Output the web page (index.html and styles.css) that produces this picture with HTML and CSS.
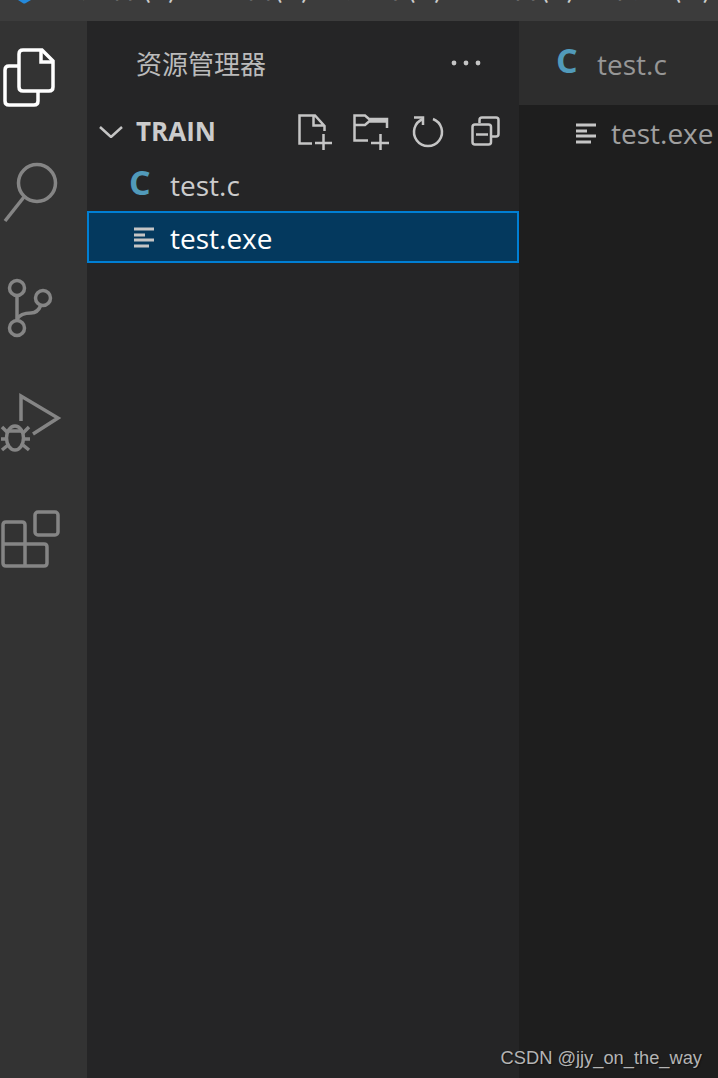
FILE: index.html
```html
<!DOCTYPE html>
<html lang="zh-CN">

<head>
    <meta charset="UTF-8">
    <meta name="viewport" content="width=device-width, initial-scale=1.0">
    <title>Visual Studio Code</title>
    <link rel="stylesheet" href="styles.css">
</head>

<body>
    <div class="window">

        <!-- title bar, cropped at the top of the shot -->
        <div class="titleBar">
            <svg class="logo" width="13" height="4" viewBox="0 0 13 4">
                <path d="M0 0H13L7 3.6H5.5Z" fill="#2489db" />
            </svg>
            <div class="menu">
                <span>文件(F)</span>
                <span>编辑(E)</span>
                <span>选择(S)</span>
                <span>查看(V)</span>
                <span>转到(G)</span>
            </div>
        </div>

        <div class="workbench">
            <div class="activityBar">
                <svg class="activityIcon active" viewBox="0 21 87 116">
                    <path d="M18 66H9Q5 66 5 70V101Q5 105 9 105H34Q38 105 38 101V91" />
                    <path d="M23 50H42L53 61V87Q53 91 49 91H23Q19 91 19 87V54Q19 50 23 50Z" />
                    <path d="M41 50V62H53" />
                </svg>
                <svg class="activityIcon" viewBox="0 137 87 116">
                    <circle cx="37" cy="183" r="18.5" />
                    <path d="M24 197L5 221" />
                </svg>
                <svg class="activityIcon" viewBox="0 253 87 116">
                    <circle cx="17" cy="288" r="7.5" />
                    <circle cx="43" cy="298" r="7.5" />
                    <circle cx="17" cy="328" r="7.5" />
                    <path d="M17 295V320" />
                    <path d="M17 319C20 314 25 313 31 313C36 313 39 310 41 305" />
                </svg>
                <svg class="activityIcon" viewBox="0 369 87 116">
                    <path d="M21 421V396L58 418L33 434" />
                    <ellipse cx="15" cy="438" rx="8.500" ry="12" />
                    <path d="M7 431H23M2 427L8 433M29 427L23 433M1 439H7M24 439H30M2 450L8 445M29 450L23 445" />
                </svg>
                <svg class="activityIcon" viewBox="0 485 87 116">
                    <rect x="35" y="512" width="23" height="23" rx="3" />
                    <path d="M25 544V525Q25 522 22 522H6Q3 522 3 525V563Q3 566 6 566H44Q47 566 47 563V547Q47 544 44 544H3M25 544V566" />
                </svg>
            </div>

            <div class="sideBar">
                <div class="sideHeader">
                    <span class="sideTitle">资源管理器</span>
                    <svg class="moreIcon" width="30" height="6" viewBox="0 0 30 6">
                        <circle cx="3" cy="3" r="2.4" />
                        <circle cx="15" cy="3" r="2.4" />
                        <circle cx="27" cy="3" r="2.4" />
                    </svg>
                </div>

                <div class="sectionHeader">
                    <svg class="chevron" width="24" height="12" viewBox="0 0 24 12">
                        <path d="M1 1L12 11L23 1" />
                    </svg>
                    <span class="sectionTitle">TRAIN</span>
                    <div class="toolbar">
                        <svg class="toolIcon" viewBox="296 112 36 40">
                            <path d="M312 143.500H299.500V115.500H315L324.500 126V131M313.500 115.500V125.500H324.500" />
                            <path d="M315 143H332M323.500 134V150" />
                        </svg>
                        <svg class="toolIcon" viewBox="353 112 36 40">
                            <path d="M368 140.500H354.500V115.500H365L369 119H387V128M354.500 125H365L369 121.500H387" />
                            <path d="M371 143H389M380.500 134V150" />
                        </svg>
                        <svg class="toolIcon" viewBox="410 112 36 40">
                            <path d="M433 119A14 14 0 1 1 423 119" />
                            <path d="M414 117.500H423V125" />
                        </svg>
                        <svg class="toolIcon" viewBox="467 112 36 40">
                            <path d="M479.500 123V120Q479.500 117.500 482 117.500H496Q498.500 117.500 498.500 120V134Q498.500 136.500 496 136.500H491" />
                            <rect x="472.500" y="124.500" width="18.500" height="20" rx="2.500" />
                            <path d="M476 134.500H488" />
                        </svg>
                    </div>
                </div>

                <div class="fileRow">
                    <span class="cIcon">C</span>
                    <span>test.c</span>
                </div>
                <div class="fileRow selected">
                    <svg class="linesIcon" width="21" height="21" viewBox="0 0 21 21">
                        <path d="M0 2H20M0 8H11M0 13H20M0 19H15" />
                    </svg>
                    <span class="fileName">test.exe</span>
                </div>
            </div>

            <div class="editor">
                <div class="tabBar">
                    <div class="tab">
                        <span class="cIcon">C</span>
                        <span class="fileName">test.c</span>
                    </div>
                </div>
                <div class="breadcrumb">
                    <svg class="linesIcon" width="21" height="21" viewBox="0 0 21 21">
                        <path d="M0 2H20M0 8H11M0 13H20M0 19H15" />
                    </svg>
                    <span>test.exe</span>
                </div>
            </div>
        </div>

        <div class="watermark">CSDN @jjy_on_the_way</div>
    </div>
</body>

</html>
```

FILE: styles.css
```css
body {
    margin: 0;
    background-color: #1e1e1e;
    font-family: "Open Sans", "Noto Sans CJK SC", sans-serif;
}

.window {
    position: relative;
    width: 718px;
    height: 1078px;
    overflow: hidden;
    display: flex;
    flex-direction: column;
}

.titleBar {
    flex: 0 0 21px;
    display: flex;
    background-color: #3c3c3c;
    overflow: hidden;
}

.logo {
    flex: none;
    margin-left: 18px;
}

.menu {
    display: flex;
    gap: 35px;
    margin-left: 50px;
    margin-top: -35px;
    font-family: "Noto Sans CJK SC", sans-serif;
    font-size: 30px;
    line-height: 38px;
    color: #cccccc;
    white-space: nowrap;
}

.workbench {
    flex: 1;
    display: flex;
    min-height: 0;
}

.activityBar {
    flex: 0 0 87px;
    background-color: #333333;
    display: flex;
    flex-direction: column;
}

.activityIcon {
    display: block;
    width: 87px;
    height: 116px;
    fill: none;
    stroke: #858585;
    stroke-width: 3.5;
}

.activityIcon.active {
    stroke: #ffffff;
}

.sideBar {
    flex: 0 0 432px;
    background-color: #252526;
    color: #cccccc;
}

.sideHeader {
    height: 84px;
    display: flex;
    align-items: center;
    padding-left: 49px;
    padding-right: 38px;
}

.sideTitle {
    flex: 1;
    font-family: "Noto Sans CJK SC", sans-serif;
    font-size: 26px;
    color: #bbbbbb;
    margin-bottom: 2px;
}

.moreIcon {
    fill: #c5c5c5;
}

.sectionHeader {
    height: 54px;
    display: flex;
    align-items: center;
    padding-left: 12px;
    padding-right: 16px;
}

.chevron {
    fill: none;
    stroke: #c5c5c5;
    stroke-width: 2.5;
    margin-right: 13px;
}

.sectionTitle {
    font-size: 26px;
    font-weight: 700;
    color: #cccccc;
    margin-bottom: 2px;
}

.toolbar {
    display: flex;
    margin-left: auto;
    gap: 21px;
}

.toolIcon {
    display: block;
    width: 36px;
    height: 40px;
    fill: none;
    stroke: #c5c5c5;
    stroke-width: 2.5;
}

.fileRow {
    height: 52px;
    box-sizing: border-box;
    display: flex;
    align-items: center;
    padding-left: 42px;
    font-size: 28px;
}

.fileRow .cIcon {
    margin-right: 20px;
}

.fileRow.selected {
    background-color: #04395e;
    border: 2px solid #007fd4;
    padding-left: 45px;
    color: #ffffff;
}

.fileRow.selected .linesIcon {
    margin-right: 15px;
}

.fileName {
    margin-top: 2px;
}

.cIcon {
    width: 21px;
    font-size: 34px;
    font-weight: 700;
    color: #519aba;
    line-height: 1;
    margin-top: -6px;
}

.linesIcon {
    flex: none;
    fill: none;
    stroke: #c5c5c5;
    stroke-width: 3;
}

.editor {
    flex: 1;
    background-color: #1e1e1e;
}

.tabBar {
    height: 84px;
    background-color: #2d2d2d;
}

.tab {
    height: 84px;
    display: flex;
    align-items: center;
    padding-left: 37px;
    font-size: 28px;
    color: #969696;
}

.tab .cIcon {
    margin-right: 20px;
}

.breadcrumb {
    height: 56px;
    display: flex;
    align-items: center;
    padding-left: 57px;
    font-size: 28px;
    color: #a0a0a0;
    white-space: nowrap;
}

.breadcrumb .linesIcon {
    margin-right: 14px;
}

.watermark {
    position: absolute;
    right: 16px;
    bottom: 9px;
    font-family: "Liberation Sans", sans-serif;
    font-size: 18.3px;
    color: #b4b4b4;
    text-shadow: 1px 1px 1px #111111;
}
```
